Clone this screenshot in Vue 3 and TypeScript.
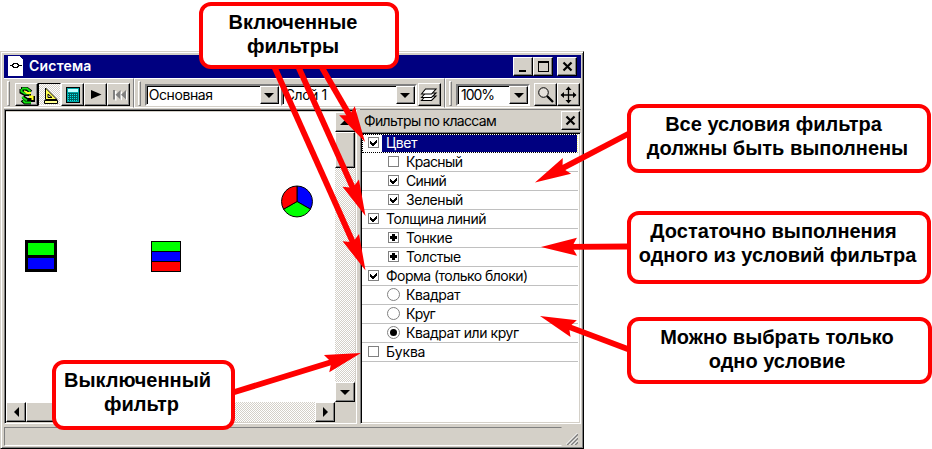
<script setup lang="ts">
type Mark = 'check' | 'none' | 'plus' | 'radio' | 'radio-on'
interface Row { text: string; mark: Mark; child?: boolean; selected?: boolean; cls: string }
interface Arrow { from: [number, number]; tip: [number, number] }

const rows: Row[] = [
  { text: 'Цвет', mark: 'check', selected: true, cls: 't-mid' },
  { text: 'Красный', mark: 'none', child: true, cls: 't-tight' },
  { text: 'Синий', mark: 'check', child: true, cls: 't-tight' },
  { text: 'Зеленый', mark: 'check', child: true, cls: 't-mid' },
  { text: 'Толщина линий', mark: 'check', cls: 't-mid' },
  { text: 'Тонкие', mark: 'plus', child: true, cls: 't-mid' },
  { text: 'Толстые', mark: 'plus', child: true, cls: 't-mid' },
  { text: 'Форма (только блоки)', mark: 'check', cls: 't-wide' },
  { text: 'Квадрат', mark: 'radio', child: true, cls: 't-mid' },
  { text: 'Круг', mark: 'radio', child: true, cls: 't-tight' },
  { text: 'Квадрат или круг', mark: 'radio-on', child: true, cls: 't-mid' },
  { text: 'Буква', mark: 'none', cls: 't-loose' },
]

const arrows: Arrow[] = [
  { from: [321, 66], tip: [365, 142] },
  { from: [298, 66], tip: [365.5, 216] },
  { from: [274, 66], tip: [365.5, 270.5] },
  { from: [629, 133.5], tip: [535, 182.5] },
  { from: [629, 246.5], tip: [541, 247] },
  { from: [629, 349.5], tip: [540, 316] },
  { from: [233, 392.5], tip: [361, 353] },
]

const place = (a: Arrow): string => {
  const angle = (Math.atan2(a.from[1] - a.tip[1], a.from[0] - a.tip[0]) * 180) / Math.PI
  return `translate(${a.tip[0]} ${a.tip[1]}) rotate(${angle})`
}
const len = (a: Arrow): number => Math.hypot(a.from[0] - a.tip[0], a.from[1] - a.tip[1])
</script>

<template>
  <div class="page">
    <div class="window">
      <div class="titlebar">
        <svg class="app-icon" width="15" height="20" viewBox="0 0 15 20" shape-rendering="crispEdges">
          <path d="M0 0H12V1H13V2H14V3H15V20H0Z" fill="#fff" />
          <path d="M2 9H5V10H2ZM4 8H6V9H4ZM5 7H10V8H5ZM4 10H6V11H4ZM5 11H10V12H5ZM9 8H11V9H9ZM9 10H11V11H9ZM10 9H14V10H10Z" fill="#000" />
        </svg>
        <span class="title">Система</span>
        <div class="win-buttons">
          <button class="btn wbtn"><svg width="17" height="15" shape-rendering="crispEdges"><path d="M4 11H11V13H4Z" /></svg></button>
          <button class="btn wbtn"><svg width="17" height="15" shape-rendering="crispEdges"><path d="M3 2H14V13H3ZM4 4V12H13V4Z" fill-rule="evenodd" /></svg></button>
          <button class="btn wbtn close"><svg width="17" height="15"><path d="M4.500 3.500L12.500 11.500M12.500 3.500L4.500 11.500" stroke="#000" stroke-width="2.200" /></svg></button>
        </div>
      </div>

      <div class="toolbar">
        <div class="band band-tools">
          <i class="grip"></i>
          <button class="btn tbtn">
            <svg width="20" height="20" viewBox="0 0 20 20">
              <path d="M4.500 4V7L8 9H14M4 4H10L14 7M6 12L10 15H16V11M5 15L8 17.500H14" fill="none" stroke="#000" stroke-width="4" />
              <path d="M4.500 4V6.500L8 8.500H13M5 3.500H10L13.500 6.500M5 12L10 15.500M6 15.500L8 17.500H14" fill="none" stroke="#10e010" stroke-width="2" />
              <path d="M7.500 5L10 7H14V9H10L7 6.500ZM12 10.500H16.500V15H14.500V13H12Z" fill="#ffff20" />
            </svg>
          </button>
          <button class="btn tbtn pressed">
            <svg width="20" height="20" viewBox="0 0 20 20"><path d="M5.500 3V14.500H17ZM8 9V12.500H12Z" fill="#ffff50" fill-rule="evenodd" stroke="#000" /><path d="M4.500 15.500H17.500V18.500H4.500Z" fill="#ffff90" stroke="#000" /></svg>
          </button>
          <button class="btn tbtn">
            <svg width="20" height="20" viewBox="0 0 20 20" shape-rendering="crispEdges"><path d="M3 2H17V18H3Z" /><path d="M4 3H16V17H4Z" fill="#00a8a8" /><path d="M5 4H15V7H5Z" fill="#c0ffff" /><path d="M5 8H15V16H5Z" fill="#006060" /><path d="M5 9.500H15M5 11.500H15M5 13.500H15M5 15.500H15" stroke="#00e8e8" stroke-dasharray="1 1" /></svg>
          </button>
          <button class="btn tbtn"><svg width="20" height="20"><path d="M5 5L15.500 9.500L5 14Z" /></svg></button>
          <button class="btn tbtn"><svg width="20" height="20"><path d="M5 5H6.500V14.500H5ZM12 5V14.500L7 9.750ZM17 5V14.500L12 9.750Z" fill="#fff" transform="translate(1 1)" /><path d="M4 5H6V14.500H4ZM11.500 5V14.500L6.500 9.750ZM17 5V14.500L12 9.750Z" fill="#808080" /></svg></button>
        </div>
        <div class="band band-layers">
          <i class="grip"></i>
          <div class="combo c1"><span class="t-mid">Основная</span><button class="btn drop"><i class="tri down"></i></button></div>
          <div class="combo c2"><span class="t-mid">Слой 1</span><button class="btn drop"><i class="tri down"></i></button></div>
          <button class="btn tbtn stack"><svg width="20" height="20" fill="#fff" stroke="#000" stroke-width="1.100"><path d="M2.500 15.500L6.500 11H17L12.500 15.500Z" /><path d="M2.500 12.500L6.500 8H17L12.500 12.500Z" /><path d="M2.500 9L6.500 4H17L12.500 9Z" /></svg></button>
        </div>
        <div class="band band-zoom">
          <i class="grip"></i>
          <div class="combo c3"><span class="percent">100%</span><button class="btn drop"><i class="tri down"></i></button></div>
          <button class="btn tbtn lens"><svg width="20" height="20" fill="none" stroke="#000"><circle cx="7.500" cy="7.500" r="4.800" fill="#e4e0da" /><path d="M11 11L17 17" stroke-width="2.300" /></svg></button>
          <button class="btn tbtn"><svg width="20" height="20"><path d="M9.500 3V17M2.500 10H16.500" stroke="#000" stroke-width="1.300" /><path d="M9.500 1.500L12.500 5H6.500ZM9.500 18.500L12.500 15H6.500ZM1.500 10L5 7V13ZM17.500 10L14 7V13Z" /></svg></button>
        </div>
      </div>

      <div class="body">
        <div class="canvas">
          <div class="drawing">
            <svg width="329" height="290">
              <g shape-rendering="crispEdges">
                <path d="M19 128H51V160H19Z" /><path d="M22 131H48V143H22Z" fill="#0f0" /><path d="M22 146H48V157H22Z" fill="#00f" />
                <path d="M145 129H175V160H145Z" /><path d="M146 130H174V139H146Z" fill="#0f0" /><path d="M146 140H174V149H146Z" fill="#00f" /><path d="M146 150H174V159H146Z" fill="#f00" />
              </g>
              <g stroke="#000" stroke-width="1">
                <path d="M291 89.500V74A15.500 15.500 0 0 1 304.400 97.200Z" fill="#00f" />
                <path d="M291 89.500L304.400 97.200A15.500 15.500 0 0 1 277.600 97.200Z" fill="#0f0" />
                <path d="M291 89.500L277.600 97.200A15.500 15.500 0 0 1 291 74Z" fill="#f00" />
              </g>
            </svg>
          </div>
          <div class="vscroll">
            <button class="btn sb"><i class="tri up"></i></button>
            <div class="btn vthumb"></div>
            <button class="btn sb end"><i class="tri down"></i></button>
          </div>
          <div class="hscroll">
            <button class="btn sb"><i class="tri left"></i></button>
            <div class="btn hthumb"></div>
            <button class="btn sb end"><i class="tri right"></i></button>
          </div>
          <div class="corner"></div>
        </div>

        <div class="panel">
          <div class="panel-head">
            <span class="t-tight">Фильтры по классам</span>
            <button class="btn pclose"><svg width="17" height="17"><path d="M4.500 4.500L12.500 12.500M12.500 4.500L4.500 12.500" stroke="#000" stroke-width="2.200" /></svg></button>
          </div>
          <div class="list">
            <div v-for="r in rows" :key="r.text" class="row" :class="{ child: r.child, selected: r.selected }">
              <svg class="mark" width="13" height="13" viewBox="0 0 13 13">
                <template v-if="r.mark.startsWith('radio')">
                  <circle cx="6.500" cy="6.500" r="6" fill="#fff" stroke="#808080" />
                  <circle v-if="r.mark === 'radio-on'" cx="6.500" cy="6.500" r="3.500" />
                </template>
                <template v-else>
                  <rect x="1.500" y="1.500" width="10" height="10" fill="#fff" stroke="#808080" />
                  <path v-if="r.mark === 'check'" d="M3 5V8L5 10H6L10 6V3L5.500 7.500Z" shape-rendering="crispEdges" />
                  <path v-if="r.mark === 'plus'" d="M5 3H8V5H10V8H8V10H5V8H3V5H5Z" shape-rendering="crispEdges" />
                </template>
              </svg>
              <span class="label"><span :class="r.cls">{{ r.text }}</span></span>
            </div>
          </div>
        </div>
      </div>

      <div class="status">
        <div class="status-cell"></div>
        <svg class="sizer" width="12" height="12"><path d="M1 12L12 1M5 12L12 5M9 12L12 9" stroke="#808080" stroke-width="1.600" /><path d="M-.5 12L12 -.5M3.500 12L12 3.500M7.500 12L12 7.500" stroke="#fff" /></svg>
      </div>
    </div>

    <svg class="arrows" width="932" height="449" fill="#f00">
      <g v-for="(a, i) in arrows" :key="i" :transform="place(a)">
        <path d="M0 0L36 -9L31 0L36 9Z" />
        <rect x="28" y="-2.900" :width="len(a) - 28" height="5.800" />
      </g>
    </svg>

    <div class="callout k1"><span>Включенные</span><span>фильтры</span></div>
    <div class="callout k2"><span class="lead">Все условия фильтра</span><span>должны быть выполнены</span></div>
    <div class="callout k3"><span class="lead">Достаточно выполнения</span><span>одного из условий фильтра</span></div>
    <div class="callout k4"><span>Можно выбрать только</span><span>одно условие</span></div>
    <div class="callout k5"><span class="lead">Выключенный</span><span>фильтр</span></div>
  </div>
</template>

<style>
body { background: #fff; overflow: hidden; }
</style>

<style scoped>
* { box-sizing: border-box; }
.page { position: relative; width: 932px; height: 449px; padding-top: 51px; overflow: hidden; background: #fff; font: 14px/19px Inter, "Liberation Sans", sans-serif; color: #000; }
.window { width: 584px; height: 398px; display: flex; flex-direction: column; background: #d4d0c8; border: 1px solid; border-color: #d4d0c8 #000 #000 #d4d0c8; box-shadow: inset 1px 1px #fff, inset -1px -1px #808080; padding: 3px 3px 2px 3px; }
.btn { display: flex; align-items: center; justify-content: center; flex: none; margin: 0; padding: 0; background: #d4d0c8; border: 1px solid; border-color: #fff #000 #000 #fff; border-radius: 0; box-shadow: inset -1px -1px #808080; }
.t-tight { letter-spacing: -.65px; }
.t-mid { letter-spacing: -.42px; }
.t-wide { letter-spacing: -.53px; }
.t-loose { letter-spacing: -.2px; }
.titlebar { height: 23px; flex: none; display: flex; background: #000080; padding: 1px 4px 0 4px; margin-right: -1px; }
.app-icon { flex: none; }
.title { color: #fff; font-weight: 600; line-height: 20px; margin-left: 6px; letter-spacing: .2px; white-space: nowrap; }
.win-buttons { display: flex; margin: 1px 0 0 auto; }
.wbtn { width: 20px; height: 19px; }
.close { margin-left: 4px; }
.toolbar { height: 31px; flex: none; display: flex; }
.band { display: flex; align-items: flex-start; padding-top: 5px; border-top: 1px solid #fff; border-bottom: 1px solid #fff; height: 30px; }
.band-tools { width: 130px; border-right: 1px solid #808080; }
.band-layers { width: 312px; border-left: 1px solid #fff; border-right: 1px solid #808080; }
.band-zoom { flex: 1; border-left: 1px solid #fff; }
.grip { width: 3px; height: 25px; margin: -3px 4px 0 3px; border: 1px solid; border-color: #fff #808080 #808080 #fff; flex: none; }
.band-tools .grip { margin-right: 5px; }
.tbtn { width: 23px; height: 23px; margin-top: -1px; }
.pressed { border-color: #000 #fff #fff #000; box-shadow: none; background: repeating-conic-gradient(#fff 0 25%, #d4d0c8 0 50%) 0 0 / 2px 2px; }
.combo { display: flex; height: 22px; background: #fff; border: 2px solid; border-color: #808080 #fff #fff #808080; box-shadow: inset 1px 1px #000; flex: none; }
.combo span { flex: 1; padding-left: 2px; line-height: 18px; white-space: nowrap; }
.combo .percent { padding-left: 3px; letter-spacing: -1px; }
.c1 { width: 136px; }
.c2 { width: 136px; }
.c3 { width: 74px; }
.drop { width: 19px; height: 18px; }
.stack { margin-left: 1px; }
.lens { margin-left: 4px; }
.tri { width: 0; height: 0; border: 5px solid transparent; }
.tri.down { border-top-color: #000; border-bottom: 0; }
.tri.up { border-bottom-color: #000; border-top: 0; }
.tri.left { border-right-color: #000; border-left: 0; }
.tri.right { border-left-color: #000; border-right: 0; }
.body { display: flex; height: 315px; flex: none; margin-right: -1px; }
.canvas { width: 353px; flex: none; display: grid; grid-template: 290px 20px / 329px 20px; border: 1px solid; border-color: #808080 #fff #fff #808080; box-shadow: inset 1px 1px #000; padding: 2px 0 0 1px; }
.drawing { background: #fff; }
.drawing svg { display: block; }
.vscroll, .hscroll { display: flex; background: repeating-conic-gradient(#fff 0 25%, #d4d0c8 0 50%) 0 0 / 2px 2px; }
.vscroll { flex-direction: column; }
.sb { width: 20px; height: 20px; }
.end { margin: auto 0 0; }
.hscroll .end { margin: 0 0 0 auto; }
.vthumb { height: 36px; }
.hthumb { width: 60px; height: 20px; }
.corner { background: #d4d0c8; }
.panel { flex: 1; margin-left: 3px; display: flex; flex-direction: column; border-top: 1px solid #808080; }
.panel-head { display: flex; height: 22px; flex: none; padding: 1px 1px 0 4px; line-height: 19px; justify-content: space-between; white-space: nowrap; }
.pclose { width: 19px; height: 19px; }
.list { flex: 1; background: #fff; border: 1px solid; border-color: #808080 #fff #fff #808080; box-shadow: inset 1px 1px #000, inset -1px -1px #d4d0c8; padding: 1px 2px 1px 1px; }
.row { height: 19px; display: flex; border-bottom: 1px solid #c0c0c0; padding-left: 5px; }
.child { padding-left: 25px; }
.mark { margin: 2px 0 0; flex: none; }
.label { flex: 1; margin-left: 2px; padding-left: 4px; line-height: 17px; white-space: nowrap; }
.child .label { padding-left: 4px; }
.selected { border: 1px dotted #000; border-right-color: #ff8; padding-left: 4px; }
.selected .mark { margin-top: 1px; }
.selected .label { background: #000080; color: #fff; line-height: 15px; }
.status { flex: 1; display: flex; align-items: flex-end; padding-top: 2px; }
.status-cell { flex: 1; height: 19px; border: 1px solid; border-color: #808080 transparent #fff #808080; }
.sizer { margin: 0 2px 1px 4px; }
.arrows { position: absolute; left: 0; top: 0; }
.callout { position: absolute; display: flex; flex-direction: column; align-items: center; background: #fff; border: 4px solid #f00; border-radius: 12px; font: bold 20px/24px "Liberation Sans", Arial, sans-serif; white-space: nowrap; }
.lead { padding-right: 8px; }
.k1 { left: 199px; top: 2px; width: 200px; height: 67px; padding: 4px 12px 0 0; }
.k2 { left: 627px; top: 104px; width: 304px; height: 69px; padding: 4px 3px 0 0; }
.k3 { left: 627px; top: 211px; width: 304px; height: 73px; padding: 4px 3px 0 0; }
.k4 { left: 627px; top: 317px; width: 305px; height: 67px; padding: 4px 5px 0 0; }
.k5 { left: 52px; top: 360px; width: 183px; height: 70px; padding: 4px 4px 0 0; }
</style>
